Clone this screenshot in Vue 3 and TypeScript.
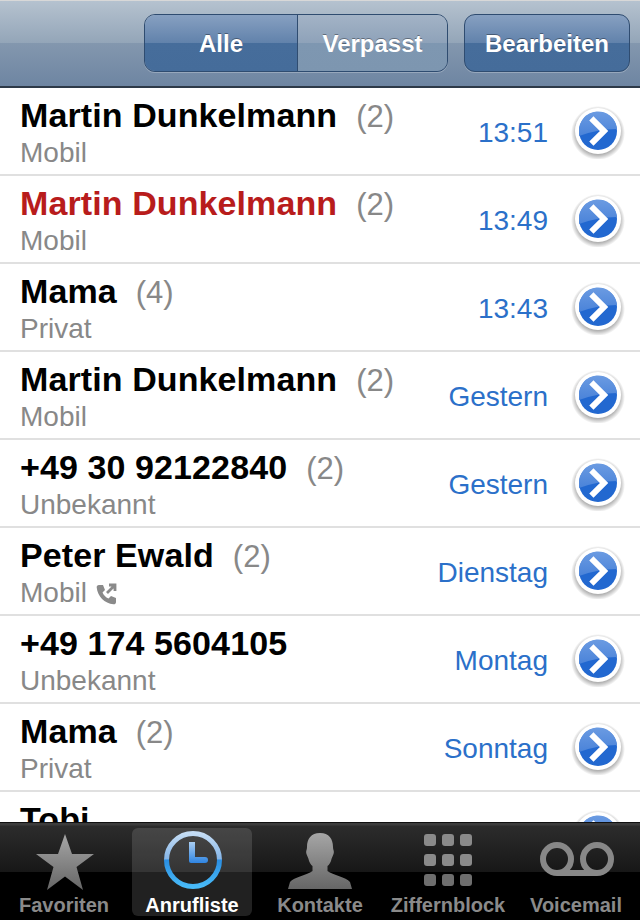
<script setup lang="ts">
interface Call {
  name: string
  count?: number
  kind: string
  time: string
  missed?: boolean
  outgoing?: boolean
}

const calls: Call[] = [
  { name: 'Martin Dunkelmann', count: 2, kind: 'Mobil', time: '13:51' },
  { name: 'Martin Dunkelmann', count: 2, kind: 'Mobil', time: '13:49', missed: true },
  { name: 'Mama', count: 4, kind: 'Privat', time: '13:43' },
  { name: 'Martin Dunkelmann', count: 2, kind: 'Mobil', time: 'Gestern' },
  { name: '+49 30 92122840', count: 2, kind: 'Unbekannt', time: 'Gestern' },
  { name: 'Peter Ewald', count: 2, kind: 'Mobil', time: 'Dienstag', outgoing: true },
  { name: '+49 174 5604105', kind: 'Unbekannt', time: 'Montag' },
  { name: 'Mama', count: 2, kind: 'Privat', time: 'Sonntag' },
  // cut off by the tab bar, only the top of the name shows
  { name: 'Tobi', kind: '', time: '' },
]

const keys = [0, 1, 2, 3, 4, 5, 6, 7, 8]
</script>

<template>
  <div class="phone">
    <header class="nav">
      <div class="segments">
        <button class="seg seg--on">Alle</button>
        <button class="seg">Verpasst</button>
      </div>
      <button class="edit">Bearbeiten</button>
    </header>

    <main class="list">
      <div v-for="(c, i) in calls" :key="i" class="row">
        <div class="who">
          <div class="line">
            <span class="name" :class="{ 'name--missed': c.missed }">{{ c.name }}</span>
            <span v-if="c.count" class="count">({{ c.count }})</span>
          </div>
          <div class="kind">
            {{ c.kind }}
            <svg v-if="c.outgoing" class="out" viewBox="0 0 24 24" width="24" height="24">
              <path d="M5 3 L9 3 L11 8 L8.5 10.5 C9.8 13.4 11.6 15.2 14.5 16.5 L17 14 L22 16 L22 20 C22 21.5 20.8 22.5 19.5 22.3 C10.5 21.4 3.6 14.5 2.7 5.5 C2.5 4.2 3.5 3 5 3 Z" fill="#8a8a8a" />
              <path d="M13 11 L20 4 M15 3 L21 3 L21 9" fill="none" stroke="#8a8a8a" stroke-width="2.8" />
            </svg>
          </div>
        </div>
        <span class="time">{{ c.time }}</span>
        <svg class="more" viewBox="0 0 56 56" width="56" height="56">
          <defs>
            <radialGradient :id="'shade' + i" cx="50%" cy="50%" r="50%">
              <stop offset="80%" stop-color="#000" stop-opacity="0.3" />
              <stop offset="100%" stop-color="#000" stop-opacity="0" />
            </radialGradient>
            <linearGradient :id="'gloss' + i" x1="0" y1="0" x2="0" y2="1">
              <stop offset="0%" stop-color="#6b9be2" />
              <stop offset="100%" stop-color="#4a83d9" />
            </linearGradient>
          </defs>
          <circle cx="28" cy="30" r="27" :fill="`url(#shade${i})`" />
          <circle cx="28" cy="28" r="23" fill="#fff" />
          <circle cx="28" cy="28" r="19" fill="#2268d0" />
          <path d="M9 29 A19 19 0 0 1 47 26 Q28 26 9 33 Z" :fill="`url(#gloss${i})`" />
          <path d="M23.5 17.5 L34 28 L23.5 38.5" fill="none" stroke="#fff" stroke-width="6" stroke-linecap="square" />
        </svg>
      </div>
    </main>

    <nav class="tabs">
      <div class="tab">
        <svg viewBox="0 0 60 56" width="60" height="56" class="ico ico--star">
          <defs>
            <linearGradient id="grey" x1="0" y1="0" x2="0" y2="1">
              <stop offset="0%" stop-color="#a6a6a6" />
              <stop offset="100%" stop-color="#666" />
            </linearGradient>
          </defs>
          <path d="M30 0 L37 20 L59 20 L41.5 33 L48 56 L30 42.5 L12 56 L18.5 33 L1 20 L23 20 Z" fill="url(#grey)" />
        </svg>
        <span>Favoriten</span>
      </div>
      <div class="tab tab--on">
        <svg viewBox="0 0 60 60" width="60" height="60" class="ico ico--clock">
          <defs>
            <linearGradient id="ring" x1="0" y1="0" x2="0" y2="1">
              <stop offset="0%" stop-color="#c4dcf4" />
              <stop offset="48%" stop-color="#86b6e8" />
              <stop offset="50%" stop-color="#2a8ee2" />
              <stop offset="100%" stop-color="#48baf8" />
            </linearGradient>
            <linearGradient id="hand" x1="0" y1="0" x2="0" y2="1">
              <stop offset="0%" stop-color="#a9cdf1" />
              <stop offset="100%" stop-color="#2f85e2" />
            </linearGradient>
          </defs>
          <circle cx="31" cy="30" r="26.5" fill="none" stroke="url(#ring)" stroke-width="5" />
          <path d="M27 12 H33 V27 H43 A3 3 0 0 1 43 33 H29 A2 2 0 0 1 27 31 Z" fill="url(#hand)" />
        </svg>
        <span>Anrufliste</span>
      </div>
      <div class="tab">
        <svg viewBox="0 0 64 56" width="64" height="56" class="ico ico--person">
          <path d="M32 0 C41 0 45 6 45 14 C45 17 46.5 18 45.5 21 C45 23 44 24 43.5 26 C43 29 41 32 39.5 33 L39.5 38 C45 42 58 44 62 49 L64 56 H0 L2 49 C6 44 19 42 24.5 38 L24.5 33 C23 32 21 29 20.5 26 C20 24 19 23 18.5 21 C17.5 18 19 17 19 14 C19 6 23 0 32 0 Z" fill="url(#grey)" />
        </svg>
        <span>Kontakte</span>
      </div>
      <div class="tab">
        <div class="keys ico">
          <i v-for="k in keys" :key="k" />
        </div>
        <span>Ziffernblock</span>
      </div>
      <div class="tab">
        <svg viewBox="0 0 74 34" width="74" height="34" class="ico ico--vm">
          <circle cx="17" cy="17" r="14" fill="none" stroke="#878787" stroke-width="6" />
          <circle cx="57" cy="17" r="14" fill="none" stroke="#878787" stroke-width="6" />
          <path d="M17 31 H57" stroke="#878787" stroke-width="6" />
        </svg>
        <span>Voicemail</span>
      </div>
    </nav>
  </div>
</template>

<style>
html,
body {
  margin: 0;
  background: #fff;
}
</style>

<style scoped>
.phone {
  width: 640px;
  height: 920px;
  display: flex;
  flex-direction: column;
  overflow: hidden;
  font-family: "Liberation Sans", Arial, sans-serif;
}

.nav {
  flex-shrink: 0;
  height: 88px;
  box-sizing: border-box;
  display: flex;
  justify-content: flex-end;
  align-items: flex-start;
  gap: 16px;
  padding: 13px 10px 0 0;
  background: linear-gradient(#b5c2cf 0, #93a5b8 50%, #8397ae 50%, #6e85a2 100%);
  border-top: 1px solid #d8d8d8;
  border-bottom: 2px solid #2d3948;
}

.segments {
  display: flex;
  width: 304px;
  height: 58px;
  box-sizing: border-box;
  border: 1px solid #2f4c70;
  border-radius: 11px;
  overflow: hidden;
  box-shadow: 0 1px 0 rgba(255, 255, 255, 0.25);
}

.seg,
.edit {
  border: 0;
  padding: 1px 0 0;
  margin: 0;
  font: bold 24px "Liberation Sans", Arial, sans-serif;
  color: #fff;
  text-shadow: 0 -1px 0 rgba(0, 0, 0, 0.35);
}

.seg {
  flex: 1;
  background: linear-gradient(#a3b3c6 0, #8ea2b9 50%, #7e97b1 50%, #7d96b0 100%);
}

.seg--on {
  flex: 0 0 153px;
  background: linear-gradient(#87a0c1 0, #6182ab 50%, #466d9b 50%, #456c9a 100%);
  border-right: 1px solid #2f4c70;
}

.edit {
  width: 166px;
  height: 58px;
  box-sizing: border-box;
  border: 1px solid #2f4c70;
  border-radius: 11px;
  background: linear-gradient(#87a0c1 0, #6182ab 50%, #466d9b 50%, #456c9a 100%);
  box-shadow: 0 1px 0 rgba(255, 255, 255, 0.25);
}

.list {
  flex: 1;
  min-height: 0;
  overflow: hidden;
  background: #fff;
}

.row {
  height: 88px;
  box-sizing: border-box;
  display: flex;
  align-items: center;
  padding: 0 14px 0 20px;
  border-bottom: 2px solid #e0e0e0;
}

.who {
  flex: 1;
  min-width: 0;
  margin-top: -1px;
}

.line {
  display: flex;
  align-items: baseline;
  gap: 19px;
  height: 45px;
  line-height: 46px;
}

.name {
  font-size: 34px;
  letter-spacing: 0.1px;
  font-weight: bold;
  color: #000;
}

.name--missed {
  color: #b81c1c;
}

.count {
  font-size: 31px;
  color: #888;
}

.kind {
  display: flex;
  align-items: center;
  gap: 7px;
  height: 32px;
  font-size: 28px;
  line-height: 32px;
  color: #888;
}

.out {
  margin-top: 1px;
}

.time {
  font-size: 28px;
  color: #2b70c9;
  margin-top: 4px;
}

.more {
  flex-shrink: 0;
  margin-left: 22px;
  margin-top: 0;
}

.tabs {
  flex-shrink: 0;
  height: 98px;
  box-sizing: border-box;
  display: grid;
  grid-template-columns: repeat(5, 128px);
  padding: 5px 0 4px;
  background: linear-gradient(#3c3c3c 0, #3c3c3c 2px, #2c2c2c 3px, #171717 49px, #000 49px, #000 100%);
  border-top: 1px solid #111;
}

.tab {
  position: relative;
  margin: 0 4px;
  border-radius: 6px;
  display: flex;
  flex-direction: column;
  align-items: center;
  justify-content: flex-end;
  font-size: 20px;
  font-weight: bold;
  line-height: 22px;
  color: #8a8a8a;
}

.tab--on {
  background: rgba(255, 255, 255, 0.13);
  color: #fff;
}

.ico {
  position: absolute;
  top: 6px;
  left: 50%;
  transform: translateX(-50%);
}

.ico--star {
  left: calc(50% + 1px);
}

.ico--clock {
  top: 2px;
}

.ico--person {
  top: 5px;
}

.ico--vm {
  top: 14px;
  left: calc(50% + 1px);
}

.keys {
  display: grid;
  grid-template-columns: repeat(3, 12px);
  grid-auto-rows: 12px;
  gap: 8px 6px;
}

.keys i {
  border-radius: 3px;
  background: #8a8a8a;
}

.keys i:nth-child(n + 7) {
  background: #6e6e6e;
}
</style>
